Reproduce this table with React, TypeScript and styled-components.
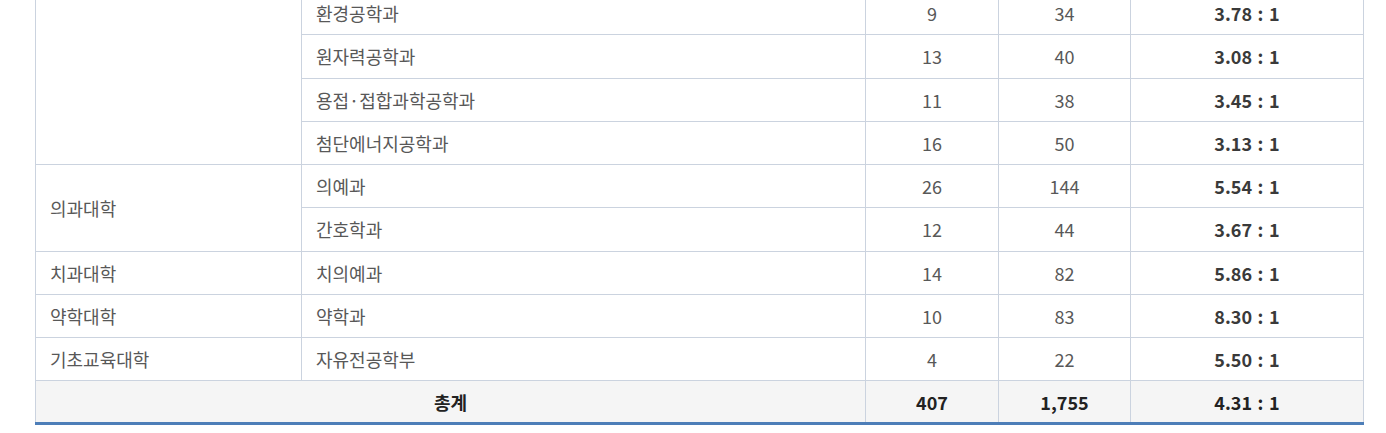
import React from 'react';
import styled, { createGlobalStyle } from 'styled-components';

const GlobalStyle = createGlobalStyle`
  html, body {
    margin: 0;
    padding: 0;
    background: #ffffff;
    overflow: hidden;
  }
  body {
    font-family: "Noto Sans CJK KR", "Noto Sans", sans-serif;
  }
`;

const Wrapper = styled.div`
  padding-left: 35px;
  margin-top: -9px;
`;

const Table = styled.table`
  width: 1328px;
  table-layout: fixed;
  border-collapse: collapse;
  border-left: 1px solid #cbd3df;
  border-right: 1px solid #cbd3df;
  border-bottom: 3px solid #4d7eb8;
  font-size: 18px;
  color: #555555;
`;

const Cell = styled.td<{ $align?: 'left' | 'center'; $strong?: boolean }>`
  height: 43.25px;
  padding: 0 14px;
  box-sizing: border-box;
  border: 1px solid #cbd3df;
  text-align: ${(p) => p.$align || 'center'};
  vertical-align: middle;
  line-height: 24px;
  font-weight: ${(p) => (p.$strong ? 700 : 400)};
  color: ${(p) => (p.$strong ? '#3a3a3a' : '#585858')};
  word-spacing: ${(p) => (p.$strong ? '1.5px' : 'normal')};
  white-space: nowrap;
`;

const TotalRow = styled.tr`
  background: #f5f5f5;

  td {
    height: 43px;
    font-weight: 700;
    color: #222222;
    word-spacing: 1.5px;
  }
`;

type Major = { name: string; quota: number; applicants: string; ratio: string };
type College = { name: string; majors: Major[] };

const colleges: College[] = [
  {
    name: '',
    majors: [
      { name: '환경공학과', quota: 9, applicants: '34', ratio: '3.78 : 1' },
      { name: '원자력공학과', quota: 13, applicants: '40', ratio: '3.08 : 1' },
      { name: '용접·접합과학공학과', quota: 11, applicants: '38', ratio: '3.45 : 1' },
      { name: '첨단에너지공학과', quota: 16, applicants: '50', ratio: '3.13 : 1' },
    ],
  },
  {
    name: '의과대학',
    majors: [
      { name: '의예과', quota: 26, applicants: '144', ratio: '5.54 : 1' },
      { name: '간호학과', quota: 12, applicants: '44', ratio: '3.67 : 1' },
    ],
  },
  {
    name: '치과대학',
    majors: [{ name: '치의예과', quota: 14, applicants: '82', ratio: '5.86 : 1' }],
  },
  {
    name: '약학대학',
    majors: [{ name: '약학과', quota: 10, applicants: '83', ratio: '8.30 : 1' }],
  },
  {
    name: '기초교육대학',
    majors: [{ name: '자유전공학부', quota: 4, applicants: '22', ratio: '5.50 : 1' }],
  },
];

const App: React.FC = () => {
  return (
    <>
      <GlobalStyle />
      <Wrapper>
        <Table>
          <colgroup>
            <col style={{ width: 266 }} />
            <col style={{ width: 564 }} />
            <col style={{ width: 133 }} />
            <col style={{ width: 132 }} />
            <col style={{ width: 233 }} />
          </colgroup>
          <tbody>
            {colleges.map((college, ci) =>
              college.majors.map((major, mi) => (
                <tr key={`${ci}-${mi}`}>
                  {mi === 0 && (
                    <Cell $align='left' rowSpan={college.majors.length}>
                      {college.name}
                    </Cell>
                  )}
                  <Cell $align='left'>{major.name}</Cell>
                  <Cell>{major.quota}</Cell>
                  <Cell>{major.applicants}</Cell>
                  <Cell $strong>{major.ratio}</Cell>
                </tr>
              ))
            )}
            <TotalRow>
              <Cell colSpan={2}>총계</Cell>
              <Cell>407</Cell>
              <Cell>1,755</Cell>
              <Cell>4.31 : 1</Cell>
            </TotalRow>
          </tbody>
        </Table>
      </Wrapper>
    </>
  );
};

export default App;
